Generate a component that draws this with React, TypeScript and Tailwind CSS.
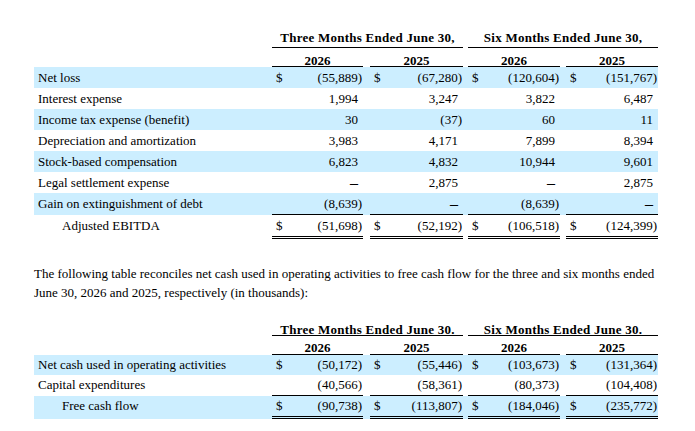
import React from "react";

type Row = {
  label: string;
  vals: string[];
  dollar?: boolean;
  blue?: boolean;
  indent?: boolean;
  line?: "single" | "double";
};

const rows1: Row[] = [
  { label: "Net loss", vals: ["(55,889)", "(67,280)", "(120,604)", "(151,767)"], dollar: true, blue: true },
  { label: "Interest expense", vals: ["1,994", "3,247", "3,822", "6,487"] },
  { label: "Income tax expense (benefit)", vals: ["30", "(37)", "60", "11"], blue: true },
  { label: "Depreciation and amortization", vals: ["3,983", "4,171", "7,899", "8,394"] },
  { label: "Stock-based compensation", vals: ["6,823", "4,832", "10,944", "9,601"], blue: true },
  { label: "Legal settlement expense", vals: ["—", "2,875", "—", "2,875"] },
  { label: "Gain on extinguishment of debt", vals: ["(8,639)", "—", "(8,639)", "—"], blue: true, line: "single" },
  { label: "Adjusted EBITDA", vals: ["(51,698)", "(52,192)", "(106,518)", "(124,399)"], dollar: true, indent: true, line: "double" },
];

const rows2: Row[] = [
  { label: "Net cash used in operating activities", vals: ["(50,172)", "(55,446)", "(103,673)", "(131,364)"], dollar: true, blue: true },
  { label: "Capital expenditures", vals: ["(40,566)", "(58,361)", "(80,373)", "(104,408)"], line: "single" },
  { label: "Free cash flow", vals: ["(90,738)", "(113,807)", "(184,046)", "(235,772)"], dollar: true, blue: true, indent: true, line: "double" },
];

const segMargins = ["ml-0 mr-[4px]", "ml-[3px] mr-[3px]", "ml-[2px] mr-[3px]", "ml-[3px] mr-0"];
const groupMargins = ["ml-0 mr-[3px]", "ml-[2px] mr-0"];
const years = ["2026", "2025", "2026", "2025"];

function Value({ v }: { v: string }) {
  if (v === "—") {
    return <span className="pr-[5px] text-[16px]">–</span>;
  }
  return <span className={v.endsWith(")") ? "pr-[1px]" : "pr-[5px]"}>{v}</span>;
}

function BodyRow({ row, h }: { row: Row; h: string }) {
  return (
    <div className={`grid grid-cols-[238px_95px_99px_97px_95px] ${row.blue ? "bg-[#cceeff]" : ""}`}>
      <div className={`${h} ${row.indent ? "pl-[28px]" : "pl-[4px]"} whitespace-nowrap`}>{row.label}</div>
      {row.vals.map((v, i) => (
        <div key={i} className={segMargins[i]}>
          <div
            className={`flex justify-between whitespace-nowrap ${h} ${
              row.line === "double"
                ? "border-b-[3px] border-double border-black"
                : row.line === "single"
                ? "border-b border-black"
                : ""
            } box-content`}
          >
            <span className="pl-[4px]">{row.dollar ? "$" : ""}</span>
            <Value v={v} />
          </div>
        </div>
      ))}
    </div>
  );
}

export default function App() {
  return (
    <div className="bg-white w-[695px] h-[431px] overflow-hidden text-black text-[13px] font-['Liberation_Serif','Times_New_Roman',serif]">
      <div className="ml-[34px] w-[624px] pt-[29px]">
        {/* Table 1 header */}
        <div className="grid grid-cols-[238px_95px_99px_97px_95px] font-bold tracking-[0.25px]">
          <div />
          <div className={`col-span-2 ${groupMargins[0]}`}>
            <div className="leading-[18px] text-center border-b border-black whitespace-nowrap">Three Months Ended June 30,</div>
          </div>
          <div className={`col-span-2 ${groupMargins[1]}`}>
            <div className="leading-[18px] text-center border-b border-black whitespace-nowrap">Six Months Ended June 30,</div>
          </div>
        </div>
        <div className="grid grid-cols-[238px_95px_99px_97px_95px] font-bold">
          <div />
          {years.map((y, i) => (
            <div key={i} className={`pt-[7px] ${segMargins[i]}`}>
              <div className="leading-[11px] text-center border-b border-black">{y}</div>
            </div>
          ))}
        </div>
        {rows1.map((r, i) => (
          <BodyRow key={i} row={r} h="leading-[21px] h-[21px]" />
        ))}

        <p className="mt-[25px] leading-[19px]">
          The following table reconciles net cash used in operating activities to free cash flow for the three and six months ended
          <br />
          June 30, 2026 and 2025, respectively (in thousands):
        </p>

        {/* Table 2 header */}
        <div className="mt-[19px] grid grid-cols-[238px_95px_99px_97px_95px] font-bold tracking-[0.25px]">
          <div />
          <div className={`col-span-2 pt-[3px] ${groupMargins[0]}`}>
            <div className="leading-[11px] text-center border-b border-black whitespace-nowrap">Three Months Ended June 30.</div>
          </div>
          <div className={`col-span-2 pt-[3px] ${groupMargins[1]}`}>
            <div className="leading-[11px] text-center border-b border-black whitespace-nowrap">Six Months Ended June 30.</div>
          </div>
        </div>
        <div className="grid grid-cols-[238px_95px_99px_97px_95px] font-bold">
          <div />
          {years.map((y, i) => (
            <div key={i} className={`pt-[6px] ${segMargins[i]}`}>
              <div className="leading-[12px] text-center border-b border-black">{y}</div>
            </div>
          ))}
        </div>
        {rows2.map((r, i) => (
          <BodyRow key={i} row={r} h="leading-[20px] h-[20px]" />
        ))}
      </div>
    </div>
  );
}
